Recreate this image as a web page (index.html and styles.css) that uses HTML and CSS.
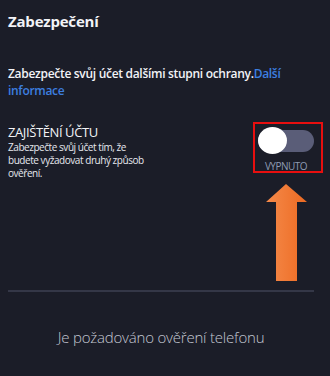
FILE: index.html
```html
<!DOCTYPE html>
<html lang="cs">
<head>
<meta charset="utf-8">
<link rel="stylesheet" href="styles.css">
</head>
<body>
<div class="panel">
  <h1 class="title">Zabezpečení</h1>
  <p class="intro">Zabezpečte svůj účet dalšími stupni ochrany.<a class="link" href="#">Další informace</a></p>
  <div class="row">
    <div class="info">
      <div class="label">ZAJIŠTĚNÍ ÚČTU</div>
      <div class="desc">Zabezpečte svůj účet tím, že budete vyžadovat druhý způsob ověření.</div>
    </div>
    <div class="switch-wrap">
      <div class="switch"><span class="knob"></span></div>
      <div class="state">VYPNUTO</div>
    </div>
  </div>
  <hr class="divider">
  <div class="phone">Je požadováno ověření telefonu</div>
  <div class="highlight"></div>
  <svg class="arrow" width="42" height="98" viewBox="0 0 42 98">
    <defs>
      <linearGradient id="g" x1="0" y1="0" x2="1" y2="0">
        <stop offset="0" stop-color="#f58a4a"/>
        <stop offset="1" stop-color="#ec6a22"/>
      </linearGradient>
    </defs>
    <polygon points="20,0 41,18 31,18 31,97 10,97 10,18 0,18" fill="url(#g)"/>
  </svg>
</div>
</body>
</html>
```
FILE: styles.css
```css
html, body {
  margin: 0;
  padding: 0;
  background: #1b1d28;
}
body {
  font-family: "Open Sans", "Noto Sans", sans-serif;
  color: #f2f3f7;
}
.panel {
  position: relative;
  padding: 10px 16px 0 8px;
}
.title {
  margin: 0;
  font-size: 15px;
  font-weight: 700;
  line-height: 22px;
  letter-spacing: -0.2px;
}
.intro {
  margin: 33px 0 0;
  font-size: 12px;
  font-weight: 600;
  line-height: 17px;
  letter-spacing: -0.3px;
}
.link {
  color: #3d7fe0;
  text-decoration: none;
}
.row {
  display: flex;
  justify-content: space-between;
  margin-top: 24px;
}
.info {
  width: 150px;
}
.label {
  font-size: 13px;
  line-height: 18px;
  letter-spacing: -0.4px;
}
.desc {
  font-size: 10px;
  line-height: 13px;
  letter-spacing: -0.45px;
  color: #e6e8ee;
}
.switch-wrap {
  width: 58px;
  margin-right: -1px;
  display: flex;
  flex-direction: column;
  align-items: center;
  padding-top: 7px;
}
.switch {
  position: relative;
  width: 56px;
  height: 22px;
  border-radius: 11px;
  background: #5a5d78;
}
.knob {
  position: absolute;
  left: 0;
  top: -3px;
  width: 29px;
  height: 27px;
  border-radius: 50%;
  background: #ffffff;
}
.state {
  margin-top: 8px;
  font-size: 10px;
  line-height: 12px;
  letter-spacing: -0.5px;
  color: #8e9bb3;
}
.divider {
  margin: 110px 0 0;
  border: 0;
  height: 2px;
  background: #343747;
}
.phone {
  margin-top: 35px;
  text-align: center;
  font-size: 15px;
  font-weight: 300;
  letter-spacing: -0.2px;
  color: #c3c7d2;
}
.highlight {
  position: absolute;
  left: 253px;
  top: 122px;
  width: 66px;
  height: 47px;
  border: 2px solid #e80f0f;
}
.arrow {
  position: absolute;
  left: 266px;
  top: 184px;
}
```
